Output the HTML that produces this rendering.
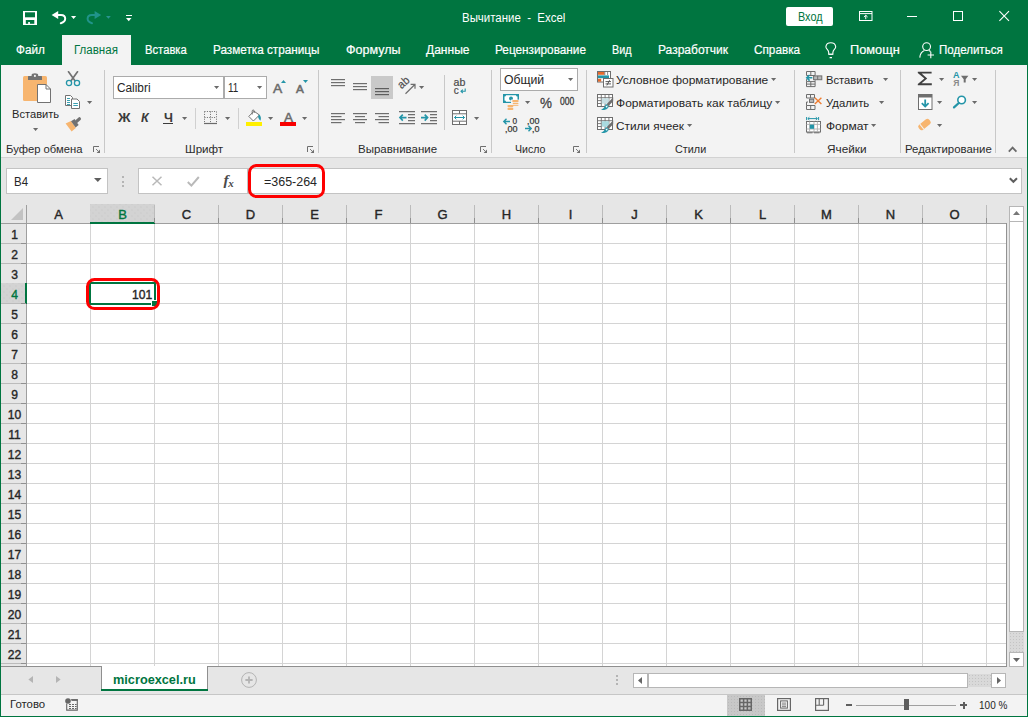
<!DOCTYPE html>
<html><head><meta charset="utf-8"><title>Excel</title><style>
html,body{margin:0;padding:0}
body{width:1028px;height:717px;overflow:hidden;position:relative;background:#e6e6e6;font-family:"Liberation Sans",sans-serif;font-size:12px;color:#262626}
.a{position:absolute}
.t{position:absolute;white-space:nowrap;transform-origin:0 50%;}
.h{position:absolute;text-align:center;font-size:13px;-webkit-text-stroke:0.4px}
svg{overflow:visible}
</style></head><body>
<div class="a" style="left:0px;top:0px;width:1028px;height:65px;background:#007540;"></div>
<div class="t" style="left:461.70px;top:11px;font-size:12.5px;line-height:14px;height:14px;color:#fff;transform:scaleX(0.9162);">Вычитание  -  Excel</div>
<div class="a" style="left:786px;top:7px;width:47px;height:19px;background:#fff;border-radius:2px"></div>
<div class="t" style="left:797.50px;top:10px;font-size:12.5px;line-height:14px;height:14px;color:#007540;transform:scaleX(0.8673);">Вход</div>
<div class="a" style="left:62px;top:35px;width:69px;height:31px;background:#f3f3f3;"></div>
<div class="t" style="left:16.00px;top:43px;font-size:12.3px;line-height:14px;height:14px;color:#fff;transform:scaleX(0.9527);-webkit-text-stroke:0.2px">Файл</div>
<div class="t" style="left:145.00px;top:43px;font-size:12.3px;line-height:14px;height:14px;color:#fff;transform:scaleX(0.9140);-webkit-text-stroke:0.2px">Вставка</div>
<div class="t" style="left:213.30px;top:43px;font-size:12.3px;line-height:14px;height:14px;color:#fff;transform:scaleX(0.9539);-webkit-text-stroke:0.2px">Разметка страницы</div>
<div class="t" style="left:345.70px;top:43px;font-size:12.3px;line-height:14px;height:14px;color:#fff;transform:scaleX(1.0197);-webkit-text-stroke:0.2px">Формулы</div>
<div class="t" style="left:425.70px;top:43px;font-size:12.3px;line-height:14px;height:14px;color:#fff;transform:scaleX(0.9785);-webkit-text-stroke:0.2px">Данные</div>
<div class="t" style="left:495.00px;top:43px;font-size:12.3px;line-height:14px;height:14px;color:#fff;transform:scaleX(0.9585);-webkit-text-stroke:0.2px">Рецензирование</div>
<div class="t" style="left:612.30px;top:43px;font-size:12.3px;line-height:14px;height:14px;color:#fff;transform:scaleX(0.8768);-webkit-text-stroke:0.2px">Вид</div>
<div class="t" style="left:658.00px;top:43px;font-size:12.3px;line-height:14px;height:14px;color:#fff;transform:scaleX(0.9773);-webkit-text-stroke:0.2px">Разработчик</div>
<div class="t" style="left:754.00px;top:43px;font-size:12.3px;line-height:14px;height:14px;color:#fff;transform:scaleX(0.9558);-webkit-text-stroke:0.2px">Справка</div>
<div class="t" style="left:850.40px;top:43px;font-size:12.3px;line-height:14px;height:14px;color:#fff;transform:scaleX(1.0387);-webkit-text-stroke:0.2px">Помощн</div>
<div class="t" style="left:938.60px;top:43px;font-size:12.3px;line-height:14px;height:14px;color:#fff;transform:scaleX(0.9375);-webkit-text-stroke:0.2px">Поделиться</div>
<div class="t" style="left:74.00px;top:43px;font-size:12.3px;line-height:14px;height:14px;color:#007540;transform:scaleX(0.9373);">Главная</div>
<svg class="a" style="left:23px;top:11px" width="14" height="14" viewBox="0 0 14 14"><rect x="0" y="0" width="14" height="14" fill="#fff"/>
<rect x="2" y="1.3" width="10" height="5" fill="#007540"/><rect x="2.8" y="9" width="8.5" height="3.8" fill="#007540"/><rect x="5.2" y="11" width="1.7" height="2" fill="#fff"/></svg>
<svg class="a" style="left:51px;top:10px" width="16" height="15" viewBox="0 0 16 15"><path d="M0.6 5L7.2 1V9z" fill="#fff"/><path d="M6.5 5H10Q14.2 5 14.2 8.8Q14.2 12 9.8 13.2" fill="none" stroke="#fff" stroke-width="2" stroke-linecap="round"/></svg>
<svg class="a" style="left:70.9px;top:16.3px" width="5.2" height="3.0" viewBox="0 0 5.2 3.0"><path d="M0 0h5.2L2.6 3.0z" fill="#fff"/></svg>
<svg class="a" style="left:86px;top:10px" width="16" height="15" viewBox="0 0 16 15"><g opacity="0.62"><path d="M15.2 5L8.6 1V9z" fill="#35a7b8"/><path d="M9.3 5H5.8Q1.6 5 1.6 8.8Q1.6 12 6 13.2" fill="none" stroke="#35a7b8" stroke-width="2" stroke-linecap="round"/></g></svg>
<svg class="a" style="left:106.1px;top:16.3px" width="4.8" height="2.8" viewBox="0 0 4.8 2.8"><path d="M0 0h4.8L2.4 2.8z" fill="#2a9490"/></svg>
<div class="a" style="left:126px;top:15px;width:5.5px;height:1.3px;background:#fff;"></div>
<svg class="a" style="left:126px;top:18px" width="6" height="4" viewBox="0 0 6 4"><path d="M0 0h5.5L2.75 3.2z" fill="#fff"/></svg>
<svg class="a" style="left:859px;top:11px" width="14" height="10" viewBox="0 0 14 10"><rect x="0.5" y="0.5" width="12.5" height="9" fill="none" stroke="#fff" stroke-width="1"/><path d="M0.5 2.6h12.5" stroke="#fff" stroke-width="1"/><path d="M6.75 8.2V4.4M4.9 6L6.75 4.2L8.6 6" stroke="#fff" stroke-width="1" fill="none"/></svg>
<div class="a" style="left:907px;top:16px;width:10px;height:1px;background:#fff;"></div>
<svg class="a" style="left:953px;top:11px" width="10" height="10" viewBox="0 0 10 10"><rect x="0.5" y="0.5" width="9" height="9" fill="none" stroke="#fff" stroke-width="1"/></svg>
<svg class="a" style="left:999px;top:11px" width="11" height="10" viewBox="0 0 11 10"><path d="M0.4 0.2L10 9.8M10 0.2L0.4 9.8" stroke="#fff" stroke-width="1.1"/></svg>
<svg class="a" style="left:825px;top:42px" width="12" height="17" viewBox="0 0 12 17"><path d="M3.7 12.2V10.4Q3.5 8.8 2.2 7.4Q0.7 5.9 0.9 4.6Q1.4 0.7 5.8 0.7T10.7 4.6Q10.9 5.9 9.4 7.4Q8.1 8.8 7.9 10.4V12.2z" fill="none" stroke="#fff" stroke-width="1.1"/><path d="M3.7 12.3h4.2M4.6 15.6h2.4" stroke="#fff" stroke-width="1.1"/></svg>
<svg class="a" style="left:919px;top:42px" width="16" height="16" viewBox="0 0 16 16"><circle cx="7.6" cy="4.6" r="3.9" fill="none" stroke="#fff" stroke-width="1.1"/><path d="M0.8 15.6Q1.2 10 5.4 8.4M9.8 8.4Q11 8.8 11.6 9.6" fill="none" stroke="#fff" stroke-width="1.1"/><path d="M8.6 13h6.4M11.8 9.8v6.4" stroke="#fff" stroke-width="1.1"/></svg>
<div class="a" style="left:1px;top:65px;width:1026px;height:92px;background:#f3f3f3;"></div>
<div class="a" style="left:1px;top:157px;width:1026px;height:1px;background:#d2d2d2;"></div>
<div class="a" style="left:104px;top:70px;width:1px;height:83px;background:#c8c8c8;"></div>
<div class="a" style="left:318px;top:70px;width:1px;height:83px;background:#c8c8c8;"></div>
<div class="a" style="left:491px;top:70px;width:1px;height:83px;background:#c8c8c8;"></div>
<div class="a" style="left:586px;top:70px;width:1px;height:83px;background:#c8c8c8;"></div>
<div class="a" style="left:794px;top:70px;width:1px;height:83px;background:#c8c8c8;"></div>
<div class="a" style="left:900px;top:70px;width:1px;height:83px;background:#c8c8c8;"></div>
<div class="a" style="left:995px;top:70px;width:1px;height:83px;background:#c8c8c8;"></div>
<div class="a" style="left:444px;top:75px;width:1px;height:55px;background:#c8c8c8;"></div>
<div class="t" style="left:6.30px;top:142px;font-size:11.8px;line-height:14px;height:14px;color:#2b2b2b;transform:scaleX(0.9540);">Буфер обмена</div>
<div class="t" style="left:184.50px;top:142px;font-size:11.8px;line-height:14px;height:14px;color:#2b2b2b;transform:scaleX(0.9838);">Шрифт</div>
<div class="t" style="left:357.70px;top:142px;font-size:11.8px;line-height:14px;height:14px;color:#2b2b2b;transform:scaleX(0.9743);">Выравнивание</div>
<div class="t" style="left:514.70px;top:142px;font-size:11.8px;line-height:14px;height:14px;color:#2b2b2b;transform:scaleX(0.8978);">Число</div>
<div class="t" style="left:674.50px;top:142px;font-size:11.8px;line-height:14px;height:14px;color:#2b2b2b;transform:scaleX(0.9181);">Стили</div>
<div class="t" style="left:827.00px;top:142px;font-size:11.8px;line-height:14px;height:14px;color:#2b2b2b;transform:scaleX(1.0006);">Ячейки</div>
<div class="t" style="left:904.60px;top:142px;font-size:11.8px;line-height:14px;height:14px;color:#2b2b2b;transform:scaleX(0.9654);">Редактирование</div>
<svg class="a" style="left:93px;top:146px" width="8" height="8" viewBox="0 0 8 8"><path d="M0.5 6V0.5H6" fill="none" stroke="#6e6e6e" stroke-width="1"/><path d="M7 3.6V7H3.6z" fill="#6e6e6e"/><path d="M3 3L5.2 5.2" stroke="#6e6e6e" stroke-width="0.9"/></svg>
<svg class="a" style="left:307px;top:146px" width="8" height="8" viewBox="0 0 8 8"><path d="M0.5 6V0.5H6" fill="none" stroke="#6e6e6e" stroke-width="1"/><path d="M7 3.6V7H3.6z" fill="#6e6e6e"/><path d="M3 3L5.2 5.2" stroke="#6e6e6e" stroke-width="0.9"/></svg>
<svg class="a" style="left:480px;top:146px" width="8" height="8" viewBox="0 0 8 8"><path d="M0.5 6V0.5H6" fill="none" stroke="#6e6e6e" stroke-width="1"/><path d="M7 3.6V7H3.6z" fill="#6e6e6e"/><path d="M3 3L5.2 5.2" stroke="#6e6e6e" stroke-width="0.9"/></svg>
<svg class="a" style="left:573px;top:146px" width="8" height="8" viewBox="0 0 8 8"><path d="M0.5 6V0.5H6" fill="none" stroke="#6e6e6e" stroke-width="1"/><path d="M7 3.6V7H3.6z" fill="#6e6e6e"/><path d="M3 3L5.2 5.2" stroke="#6e6e6e" stroke-width="0.9"/></svg>
<svg class="a" style="left:23px;top:73px" width="28" height="30" viewBox="0 0 28 30">
<rect x="0" y="3" width="24" height="25" rx="1.5" fill="#f7b56f"/>
<path d="M5 7V3.6Q5 3 5.6 3H8.6V2.2Q8.6 0.3 11.9 0.3T15.2 2.2V3H18.4Q19 3 19 3.6V7z" fill="#727272"/>
<circle cx="11.9" cy="2.9" r="1.05" fill="#f3f3f3"/>
<path d="M14.5 11.5h8.5l4.5 4.5v13.5h-13z" fill="#fff" stroke="#727272" stroke-width="1"/>
<path d="M23 11.5v4.5h4.5" fill="none" stroke="#727272" stroke-width="1"/></svg>
<div class="t" style="left:11.80px;top:107px;font-size:11.8px;line-height:14px;height:14px;color:#262626;transform:scaleX(0.9427);">Вставить</div>
<svg class="a" style="left:32.9px;top:127.5px" width="5.2" height="3.0" viewBox="0 0 5.2 3.0"><path d="M0 0h5.2L2.6 3.0z" fill="#6a6a6a"/></svg>
<svg class="a" style="left:65px;top:71px" width="16" height="16" viewBox="0 0 16 16">
<path d="M3.5 0.8L9.8 9.6M12.5 0.8L6.2 9.6" stroke="#727272" stroke-width="1.7" fill="none" stroke-linecap="round"/>
<circle cx="4" cy="12" r="2.6" fill="none" stroke="#2495a8" stroke-width="1.3"/>
<circle cx="12" cy="12" r="2.6" fill="none" stroke="#2495a8" stroke-width="1.3"/></svg>
<svg class="a" style="left:65px;top:95px" width="16" height="14" viewBox="0 0 16 14">
<path d="M0.5 0.5h5l2 2v8h-7z" fill="#fff" stroke="#727272"/>
<path d="M2 3.5h3M2 5.5h3M2 7.5h3M2 9.5h3" stroke="#2495a8" stroke-width="0.9"/>
<path d="M6.5 4h5.5l2.5 2.5v7h-8z" fill="#fff" stroke="#727272"/>
<path d="M8.3 8.5h4.6M8.3 10.5h4.6" stroke="#2495a8" stroke-width="0.9"/></svg>
<svg class="a" style="left:86.9px;top:101.0px" width="5.2" height="3.0" viewBox="0 0 5.2 3.0"><path d="M0 0h5.2L2.6 3.0z" fill="#6a6a6a"/></svg>
<svg class="a" style="left:65px;top:117px" width="17" height="15" viewBox="0 0 17 15">
<path d="M0.6 6.4L6 4L10.8 11L6.6 14.4z" fill="#f7b56f"/>
<path d="M6 4.2L9.6 2L13.6 8L10.6 10.6z" fill="#727272"/>
<path d="M11.6 4.4L14.4 1.8" stroke="#727272" stroke-width="3.2" stroke-linecap="round"/></svg>
<div class="a" style="left:113px;top:76px;width:109px;height:21px;background:#fff;border:1px solid #ababab"></div>
<div class="a" style="left:224px;top:76px;width:41px;height:21px;background:#fff;border:1px solid #ababab"></div>
<div class="t" style="left:116.80px;top:81px;font-size:12px;line-height:14px;height:14px;color:#262626;transform:scaleX(0.9853);">Calibri</div>
<div class="t" style="left:228.00px;top:81px;font-size:12px;line-height:14px;height:14px;color:#262626;transform:scaleX(0.8240);">11</div>
<svg class="a" style="left:213.9px;top:86.0px" width="5.2" height="3.0" viewBox="0 0 5.2 3.0"><path d="M0 0h5.2L2.6 3.0z" fill="#6a6a6a"/></svg>
<svg class="a" style="left:256.9px;top:86.0px" width="5.2" height="3.0" viewBox="0 0 5.2 3.0"><path d="M0 0h5.2L2.6 3.0z" fill="#6a6a6a"/></svg>
<div class="t" style="left:273.30px;top:81px;font-size:13.5px;line-height:15px;height:15px;color:#6a6a6a;transform:scaleX(1.0222);-webkit-text-stroke:0.5px #6a6a6a">A</div>
<div class="t" style="left:296.00px;top:83px;font-size:10.5px;line-height:12px;height:12px;color:#6a6a6a;transform:scaleX(1.1143);-webkit-text-stroke:0.5px #6a6a6a">A</div>
<svg class="a" style="left:281px;top:80px" width="5" height="3" viewBox="0 0 5 3"><path d="M0 3L2.5 0L5 3z" fill="#2495a8"/></svg>
<svg class="a" style="left:303px;top:80px" width="5" height="3" viewBox="0 0 5 3"><path d="M0 0h5L2.5 3z" fill="#2495a8"/></svg>
<div class="t" style="left:117.74px;top:111px;font-size:12px;line-height:14px;height:14px;color:#3b3b3b;font-weight:bold;transform:scaleX(1.1596);">Ж</div>
<div class="t" style="left:141.00px;top:111px;font-size:12px;line-height:14px;height:14px;color:#3b3b3b;font-weight:bold;font-style:italic;transform:scaleX(1.0462);">К</div>
<div class="t" style="left:163.60px;top:111px;font-size:12px;line-height:14px;height:14px;color:#3b3b3b;font-weight:bold;transform:scaleX(1.0627);">Ч</div>
<div class="a" style="left:163px;top:123px;width:10px;height:1px;background:#3b3b3b;"></div>
<svg class="a" style="left:181.9px;top:117.0px" width="5.2" height="3.0" viewBox="0 0 5.2 3.0"><path d="M0 0h5.2L2.6 3.0z" fill="#6a6a6a"/></svg>
<div class="a" style="left:195px;top:108px;width:1px;height:21px;background:#d0d0d0;"></div>
<div class="a" style="left:238px;top:108px;width:1px;height:21px;background:#d0d0d0;"></div>
<svg class="a" style="left:204px;top:111px" width="13" height="13" viewBox="0 0 13 13"><path d="M0.5 0.5h12M0.5 6.5h12M0.5 0.5v11M6.5 0.5v11M12.5 0.5v11" stroke="#6a6a6a" stroke-width="1" stroke-dasharray="1 1.4" fill="none"/>
<path d="M0 12.5h13" stroke="#6a6a6a" stroke-width="1.2"/></svg>
<svg class="a" style="left:224.9px;top:117.0px" width="5.2" height="3.0" viewBox="0 0 5.2 3.0"><path d="M0 0h5.2L2.6 3.0z" fill="#6a6a6a"/></svg>
<svg class="a" style="left:246px;top:109px" width="17" height="17" viewBox="0 0 17 17">
<path d="M8 2.2L2.8 7.4L7.4 12L13.4 6z" fill="#fff" stroke="#727272" stroke-width="1"/>
<path d="M6.2 5.5V2.2q0-1.2 1-1.2t1 1.2V4" fill="none" stroke="#727272" stroke-width="1"/>
<path d="M13.2 5.5q2.6 2.6 1.2 6.2q-1.6-1.2-2.4-4z" fill="#2495a8"/>
<rect x="0" y="13" width="16" height="4" fill="#ffef00"/></svg>
<svg class="a" style="left:267.9px;top:117.0px" width="5.2" height="3.0" viewBox="0 0 5.2 3.0"><path d="M0 0h5.2L2.6 3.0z" fill="#6a6a6a"/></svg>
<div class="t" style="left:284.00px;top:110px;font-size:13.5px;line-height:15px;height:15px;color:#6a6a6a;transform:scaleX(1.0000);-webkit-text-stroke:0.5px #6a6a6a">A</div>
<div class="a" style="left:280px;top:122px;width:16px;height:4px;background:#f80000;"></div>
<svg class="a" style="left:301.9px;top:117.0px" width="5.2" height="3.0" viewBox="0 0 5.2 3.0"><path d="M0 0h5.2L2.6 3.0z" fill="#6a6a6a"/></svg>
<svg class="a" style="left:331px;top:79px" width="16" height="16" viewBox="0 0 16 16"><rect x="0" y="0" width="14" height="1.2" fill="#6e6e6e"/><rect x="0" y="3" width="14" height="1.2" fill="#6e6e6e"/><rect x="0" y="6" width="14" height="1.2" fill="#6e6e6e"/></svg>
<svg class="a" style="left:353px;top:83px" width="16" height="16" viewBox="0 0 16 16"><rect x="0" y="0" width="14" height="1.2" fill="#6e6e6e"/><rect x="0" y="3" width="14" height="1.2" fill="#6e6e6e"/><rect x="0" y="6" width="14" height="1.2" fill="#6e6e6e"/></svg>
<div class="a" style="left:371px;top:76px;width:22px;height:23px;background:#c9c9c9;"></div>
<svg class="a" style="left:375px;top:88px" width="16" height="16" viewBox="0 0 16 16"><rect x="0" y="0" width="14" height="1.2" fill="#5e5e5e"/><rect x="0" y="3" width="14" height="1.2" fill="#5e5e5e"/><rect x="0" y="6" width="14" height="1.2" fill="#5e5e5e"/></svg>
<svg class="a" style="left:399px;top:78px" width="18" height="17" viewBox="0 0 18 17"><text x="0" y="0" font-size="11.5" font-family="Liberation Sans" fill="#4f4f4f" stroke="#4f4f4f" stroke-width="0.2" transform="translate(2.6,11.2) rotate(-42) scale(0.92,1)">ab</text>
<path d="M6.5 15.8L15.6 6.8M11.6 6.3h4.4v4.4" stroke="#6e6e6e" stroke-width="1.2" fill="none"/></svg>
<svg class="a" style="left:418.9px;top:86.0px" width="5.2" height="3.0" viewBox="0 0 5.2 3.0"><path d="M0 0h5.2L2.6 3.0z" fill="#6a6a6a"/></svg>
<svg class="a" style="left:453px;top:79px" width="14" height="16" viewBox="0 0 14 16"><text x="0.6" y="7.2" font-size="10" font-family="Liberation Sans" fill="#4a4a4a" stroke="#4a4a4a" stroke-width="0.2" textLength="11.8" lengthAdjust="spacingAndGlyphs">ab</text>
<text x="0.8" y="14.8" font-size="10" font-family="Liberation Sans" fill="#4a4a4a" stroke="#4a4a4a" stroke-width="0.2">c</text>
<path d="M12.2 9.5v2.8H8.2M9.8 10.6L8 12.3L9.8 14" stroke="#2495a8" stroke-width="1.1" fill="none"/></svg>
<svg class="a" style="left:331px;top:113px" width="16" height="16" viewBox="0 0 16 16"><rect x="0" y="0" width="14" height="1.2" fill="#6e6e6e"/><rect x="0" y="3" width="10.5" height="1.2" fill="#6e6e6e"/><rect x="0" y="6" width="14" height="1.2" fill="#6e6e6e"/><rect x="0" y="9" width="10.5" height="1.2" fill="#6e6e6e"/></svg>
<svg class="a" style="left:353px;top:113px" width="16" height="16" viewBox="0 0 16 16"><rect x="0" y="0" width="14" height="1.2" fill="#6e6e6e"/><rect x="2" y="3" width="10" height="1.2" fill="#6e6e6e"/><rect x="0" y="6" width="14" height="1.2" fill="#6e6e6e"/><rect x="2" y="9" width="10" height="1.2" fill="#6e6e6e"/></svg>
<svg class="a" style="left:375px;top:113px" width="16" height="16" viewBox="0 0 16 16"><rect x="0" y="0" width="14" height="1.2" fill="#6e6e6e"/><rect x="3.5" y="3" width="10.5" height="1.2" fill="#6e6e6e"/><rect x="0" y="6" width="14" height="1.2" fill="#6e6e6e"/><rect x="3.5" y="9" width="10.5" height="1.2" fill="#6e6e6e"/></svg>
<svg class="a" style="left:399px;top:111px" width="16" height="13" viewBox="0 0 16 13"><path d="M0 0.6h16M9 3.6h7M9 6.6h7M9 9.6h7M0 12.6h16" stroke="#6e6e6e" stroke-width="1.2"/>
<path d="M7.5 6.6H1.2M3.8 3.6L0.9 6.6L3.8 9.6" stroke="#2495a8" stroke-width="1.6" fill="none"/></svg>
<svg class="a" style="left:421px;top:111px" width="16" height="13" viewBox="0 0 16 13"><path d="M0 0.6h16M9 3.6h7M9 6.6h7M9 9.6h7M0 12.6h16" stroke="#6e6e6e" stroke-width="1.2"/>
<path d="M0 6.6h6.3M3.7 3.6L6.6 6.6L3.7 9.6" stroke="#2495a8" stroke-width="1.6" fill="none"/></svg>
<svg class="a" style="left:452px;top:110px" width="15" height="15" viewBox="0 0 15 15"><rect x="0.5" y="0.5" width="14" height="14" fill="#fff" stroke="#6e6e6e"/>
<path d="M0.5 3.8h14M0.5 11.2h14M7.5 0.5v3.3M7.5 11.2v3.3" stroke="#6e6e6e" stroke-width="1"/>
<path d="M2.5 7.5h10M4.3 5.7L2.5 7.5L4.3 9.3M10.7 5.7L12.5 7.5L10.7 9.3" stroke="#2495a8" stroke-width="1" fill="none"/></svg>
<svg class="a" style="left:473.9px;top:117.0px" width="5.2" height="3.0" viewBox="0 0 5.2 3.0"><path d="M0 0h5.2L2.6 3.0z" fill="#6a6a6a"/></svg>
<div class="a" style="left:500px;top:68px;width:76px;height:21px;background:#fff;border:1px solid #ababab"></div>
<div class="t" style="left:503.80px;top:73px;font-size:12px;line-height:14px;height:14px;color:#262626;transform:scaleX(1.0177);">Общий</div>
<svg class="a" style="left:567.9px;top:78.0px" width="5.2" height="3.0" viewBox="0 0 5.2 3.0"><path d="M0 0h5.2L2.6 3.0z" fill="#6a6a6a"/></svg>
<svg class="a" style="left:503px;top:94px" width="17" height="17" viewBox="0 0 17 17"><rect x="0" y="0" width="16" height="9" fill="#2495a8"/>
<path d="M1.5 2.5q1.5 0 1.5-1.2h10q0 1.2 1.5 1.2v4q-1.5 0-1.5 1.2h-10q0-1.2-1.5-1.2z" fill="#fff"/>
<circle cx="8" cy="4.5" r="2" fill="#2495a8"/>
<rect x="8" y="5.6" width="8.5" height="10.5" fill="#f3f3f3"/>
<rect x="9.2" y="6" width="6.5" height="2.2" rx="1.1" fill="#f7b56f"/><rect x="9.8" y="9" width="5.6" height="1" fill="#f7b56f"/><rect x="9.8" y="10.8" width="5.6" height="1" fill="#f7b56f"/>
<rect x="4.4" y="11" width="6" height="2.2" rx="1.1" fill="#f7b56f"/><rect x="4.4" y="13.8" width="6" height="2.2" rx="1.1" fill="#f7b56f"/></svg>
<svg class="a" style="left:524.9px;top:101.0px" width="5.2" height="3.0" viewBox="0 0 5.2 3.0"><path d="M0 0h5.2L2.6 3.0z" fill="#6a6a6a"/></svg>
<div class="t" style="left:539.80px;top:94px;font-size:15px;line-height:17px;height:17px;color:#444;transform:scaleX(0.8972);-webkit-text-stroke:0.3px #444">%</div>
<div class="t" style="left:560.00px;top:96px;font-size:10px;line-height:11px;height:11px;color:#3a3a3a;transform:scaleX(0.8537);-webkit-text-stroke:0.3px #3a3a3a">000</div>
<svg class="a" style="left:503px;top:118px" width="15" height="15" viewBox="0 0 15 15"><path d="M7 3.5H1M3.5 0.8L0.8 3.5L3.5 6.2" stroke="#2495a8" stroke-width="1.4" fill="none"/>
<text x="9.5" y="6.3" font-size="8.5" font-family="Liberation Sans" fill="#3a3a3a" stroke="#3a3a3a" stroke-width="0.25" textLength="4.6" lengthAdjust="spacingAndGlyphs">0</text>
<text x="2" y="13.8" font-size="8.5" font-family="Liberation Sans" fill="#3a3a3a" stroke="#3a3a3a" stroke-width="0.25" textLength="12.6" lengthAdjust="spacingAndGlyphs">,00</text></svg>
<svg class="a" style="left:525px;top:118px" width="15" height="15" viewBox="0 0 15 15"><text x="2" y="6.3" font-size="8.5" font-family="Liberation Sans" fill="#3a3a3a" stroke="#3a3a3a" stroke-width="0.25" textLength="12.4" lengthAdjust="spacingAndGlyphs">,00</text>
<path d="M0 10.5h6M3.5 7.8L6.2 10.5L3.5 13.2" stroke="#2495a8" stroke-width="1.4" fill="none"/>
<text x="7" y="13.8" font-size="8.5" font-family="Liberation Sans" fill="#3a3a3a" stroke="#3a3a3a" stroke-width="0.25" textLength="7.5" lengthAdjust="spacingAndGlyphs">,0</text></svg>
<svg class="a" style="left:597px;top:71px" width="17" height="17" viewBox="0 0 17 17"><rect x="0.5" y="0.5" width="13" height="10.5" fill="#fff" stroke="#6e6e6e"/>
<rect x="1" y="1" width="6.5" height="2.8" fill="#e66a2c"/><rect x="1" y="4.4" width="11" height="2.8" fill="#2495a8"/><rect x="1" y="7.8" width="3.2" height="2.8" fill="#e66a2c"/>
<path d="M7.8 1v3M10.6 1v3" stroke="#6e6e6e" stroke-width="0.8"/>
<rect x="6.5" y="7.5" width="9.5" height="8.5" fill="#fff" stroke="#6e6e6e"/>
<path d="M8.5 10.6h5.5M8.5 12.9h5.5M12.6 9.2L9.9 14.4" stroke="#4a4a4a" stroke-width="0.9"/></svg>
<svg class="a" style="left:597px;top:94px" width="17" height="17" viewBox="0 0 17 17"><rect x="0.5" y="0.5" width="15" height="12" fill="#fff" stroke="#6e6e6e"/>
<path d="M0.5 3.7h15M4.3 0.5v12M8.1 0.5v12M11.9 0.5v12M0.5 6.6h4M0.5 9.5h4" stroke="#6e6e6e" stroke-width="0.9"/>
<rect x="4.8" y="4.2" width="7" height="5.5" fill="#c8dfe3"/>
<path d="M16.2 3.2L9.6 10.2L11.4 11.9L16.2 7.2z" fill="#6e6e6e"/>
<path d="M9.2 10L11.8 12.4Q11 16 4 16Q7.5 14 9.2 10z" fill="#2495a8"/><circle cx="9.6" cy="12.6" r="0.9" fill="#fff"/></svg>
<svg class="a" style="left:597px;top:117px" width="17" height="17" viewBox="0 0 17 17"><rect x="0.5" y="0.5" width="15" height="12" fill="#fff" stroke="#6e6e6e"/>
<path d="M0.5 3.7h15M4.3 0.5v12M8.1 0.5v12M11.9 0.5v12M0.5 6.6h4M0.5 9.5h4" stroke="#6e6e6e" stroke-width="0.9"/>
<rect x="4.8" y="4.2" width="7" height="5.5" fill="#a9dbe0"/>
<path d="M16.2 3.2L9.6 10.2L11.4 11.9L16.2 7.2z" fill="#6e6e6e"/>
<path d="M9.2 10L11.8 12.4Q11 16 4 16Q7.5 14 9.2 10z" fill="#2495a8"/><circle cx="9.6" cy="12.6" r="0.9" fill="#fff"/></svg>
<div class="t" style="left:616.30px;top:73px;font-size:11.8px;line-height:14px;height:14px;color:#262626;transform:scaleX(1.0147);">Условное форматирование</div>
<div class="t" style="left:616.30px;top:96px;font-size:11.8px;line-height:14px;height:14px;color:#262626;transform:scaleX(1.0185);">Форматировать как таблицу</div>
<div class="t" style="left:616.30px;top:119px;font-size:11.8px;line-height:14px;height:14px;color:#262626;transform:scaleX(0.9974);">Стили ячеек</div>
<svg class="a" style="left:770.9px;top:78.0px" width="5.2" height="3.0" viewBox="0 0 5.2 3.0"><path d="M0 0h5.2L2.6 3.0z" fill="#6a6a6a"/></svg>
<svg class="a" style="left:774.9px;top:101.0px" width="5.2" height="3.0" viewBox="0 0 5.2 3.0"><path d="M0 0h5.2L2.6 3.0z" fill="#6a6a6a"/></svg>
<svg class="a" style="left:686.9px;top:124.0px" width="5.2" height="3.0" viewBox="0 0 5.2 3.0"><path d="M0 0h5.2L2.6 3.0z" fill="#6a6a6a"/></svg>
<svg class="a" style="left:806px;top:71px" width="16" height="16" viewBox="0 0 16 16"><path d="M0.5 0.5h8.6v4h-8.6zM4.8 0.5v4M0.5 10.6h8.6v5h-8.6zM4.8 10.6v5M0.5 13.1h8.6M0.5 8.2v2.4M9.1 9.2v1.4" fill="none" stroke="#6e6e6e" stroke-width="1"/>
<rect x="7.6" y="4.9" width="8.2" height="3.8" fill="#b9b9b9" stroke="#6e6e6e"/><path d="M11.7 4.9v3.8" stroke="#6e6e6e"/>
<path d="M6.3 6.8H1M3.6 4L0.8 6.8L3.6 9.6" stroke="#2495a8" stroke-width="1.6" fill="none"/></svg>
<div class="t" style="left:825.60px;top:73px;font-size:11.8px;line-height:14px;height:14px;color:#262626;transform:scaleX(0.9487);">Вставить</div>
<svg class="a" style="left:883.1px;top:78.0px" width="5.2" height="3.0" viewBox="0 0 5.2 3.0"><path d="M0 0h5.2L2.6 3.0z" fill="#6a6a6a"/></svg>
<svg class="a" style="left:806px;top:94px" width="16" height="16" viewBox="0 0 16 16"><path d="M0.5 0.5h8v3.5h-8zM4.5 0.5v3.5M0.5 11.5h8.5v4h-8.5zM4.7 11.5v4M0.5 8v3.5M2 8h-1.5" fill="none" stroke="#6e6e6e" stroke-width="1"/>
<rect x="3.5" y="5.2" width="4.2" height="3.2" fill="#b9b9b9" stroke="#6e6e6e"/>
<path d="M8.8 3.8L15.4 10M15.4 3.8L8.8 10" stroke="#ee7d31" stroke-width="1.4" fill="none"/></svg>
<div class="t" style="left:825.60px;top:96px;font-size:11.8px;line-height:14px;height:14px;color:#262626;transform:scaleX(0.9604);">Удалить</div>
<svg class="a" style="left:879.0px;top:101.0px" width="5.2" height="3.0" viewBox="0 0 5.2 3.0"><path d="M0 0h5.2L2.6 3.0z" fill="#6a6a6a"/></svg>
<svg class="a" style="left:806px;top:117px" width="16" height="16" viewBox="0 0 16 16"><path d="M0.6 0v3.2M12.6 0v3.2M2 1.6h9.2M3.4 0.2L1.8 1.6L3.4 3M9.8 0.2L11.4 1.6L9.8 3" stroke="#2495a8" stroke-width="1" fill="none"/>
<rect x="0.5" y="4.5" width="14" height="10.5" fill="#fff" stroke="#6e6e6e"/>
<path d="M0.5 7.4h14M0.5 12h14M3.6 4.5v10.5M8 4.5v10.5M11.4 4.5v10.5" stroke="#b0b0b0" stroke-width="0.9"/>
<rect x="3.8" y="7.6" width="4.2" height="4.2" fill="#2495a8"/>
<path d="M1 15.8h5.5M8 15.8h5.5" stroke="#6e6e6e" stroke-width="1"/></svg>
<div class="t" style="left:825.60px;top:119px;font-size:11.8px;line-height:14px;height:14px;color:#262626;transform:scaleX(1.0156);">Формат</div>
<svg class="a" style="left:870.9px;top:124.0px" width="5.2" height="3.0" viewBox="0 0 5.2 3.0"><path d="M0 0h5.2L2.6 3.0z" fill="#6a6a6a"/></svg>
<svg class="a" style="left:917px;top:71px" width="16" height="15" viewBox="0 0 16 15"><path d="M14.6 2.6V0.8H0.8V2L7.4 7.5L0.8 13V14.2H14.8V12.2H4.6L10.2 7.5L4.6 2.6z" fill="#3f3f3f"/></svg>
<svg class="a" style="left:938.9px;top:77.8px" width="5.2" height="3.0" viewBox="0 0 5.2 3.0"><path d="M0 0h5.2L2.6 3.0z" fill="#6a6a6a"/></svg>
<svg class="a" style="left:953px;top:71px" width="16" height="16" viewBox="0 0 16 16"><text x="0" y="6.6" font-size="9" font-weight="bold" font-family="Liberation Sans" fill="#2495a8">A</text>
<text x="0.2" y="15.4" font-size="8.5" font-weight="bold" font-family="Liberation Sans" fill="#8a8a8a">Я</text>
<path d="M8 4.8h7.4L12.7 8.2V11.6H10.7V8.2z" fill="#6e6e6e"/></svg>
<svg class="a" style="left:971.9px;top:77.8px" width="5.2" height="3.0" viewBox="0 0 5.2 3.0"><path d="M0 0h5.2L2.6 3.0z" fill="#6a6a6a"/></svg>
<svg class="a" style="left:918px;top:94px" width="15" height="16" viewBox="0 0 15 16"><rect x="0.5" y="0.5" width="13.5" height="15" fill="#fff" stroke="#6e6e6e"/><rect x="0.5" y="0.5" width="13.5" height="3" fill="#6e6e6e"/>
<path d="M7.2 5.5v7M3.8 9.2L7.2 12.6L10.6 9.2" stroke="#2495a8" stroke-width="1.8" fill="none"/></svg>
<svg class="a" style="left:936.9px;top:101.0px" width="5.2" height="3.0" viewBox="0 0 5.2 3.0"><path d="M0 0h5.2L2.6 3.0z" fill="#6a6a6a"/></svg>
<svg class="a" style="left:953px;top:95px" width="14" height="14" viewBox="0 0 14 14"><circle cx="8.6" cy="5" r="3.8" fill="#fff" stroke="#2495a8" stroke-width="1.6"/><path d="M5.8 8L1 12.4" stroke="#2495a8" stroke-width="2.2" stroke-linecap="round"/></svg>
<svg class="a" style="left:971.9px;top:101.0px" width="5.2" height="3.0" viewBox="0 0 5.2 3.0"><path d="M0 0h5.2L2.6 3.0z" fill="#6a6a6a"/></svg>
<svg class="a" style="left:918px;top:118px" width="14" height="13" viewBox="0 0 14 13"><g transform="rotate(-38 6.5 6.5)"><rect x="-0.2" y="3.3" width="13.4" height="6.4" rx="2.4" fill="#f7b56f"/><rect x="2.6" y="3.3" width="0.9" height="6.4" fill="#f3f3f3"/></g></svg>
<svg class="a" style="left:936.9px;top:124.0px" width="5.2" height="3.0" viewBox="0 0 5.2 3.0"><path d="M0 0h5.2L2.6 3.0z" fill="#6a6a6a"/></svg>
<svg class="a" style="left:1008px;top:146px" width="10" height="7" viewBox="0 0 10 7"><path d="M0.8 5.6L4.6 1.6L8.4 5.6" stroke="#6a6a6a" stroke-width="1.8" fill="none"/></svg>
<div class="a" style="left:6px;top:168px;width:100px;height:24px;background:#fff;border:1px solid #c3c3c3"></div>
<div class="t" style="left:14.00px;top:175px;font-size:12.5px;line-height:14px;height:14px;color:#262626;transform:scaleX(0.9180);">B4</div>
<svg class="a" style="left:93.5px;top:178px" width="8" height="4" viewBox="0 0 8 4"><path d="M0 0h7.6L3.8 4z" fill="#5e5e5e"/></svg>
<div class="a" style="left:122px;top:176px;width:2px;height:2px;background:#b4b4b4;"></div>
<div class="a" style="left:122px;top:181px;width:2px;height:2px;background:#b4b4b4;"></div>
<div class="a" style="left:122px;top:185px;width:2px;height:2px;background:#b4b4b4;"></div>
<div class="a" style="left:138px;top:168px;width:108px;height:24px;background:#fff;border:1px solid #c3c3c3"></div>
<div class="a" style="left:248px;top:168px;width:772px;height:24px;background:#fff;border:1px solid #c3c3c3"></div>
<svg class="a" style="left:152px;top:176px" width="10" height="10" viewBox="0 0 10 10"><path d="M0.5 0.8L9.5 9.2M9.5 0.8L0.5 9.2" stroke="#b9b9b9" stroke-width="1.5"/></svg>
<svg class="a" style="left:187px;top:176px" width="13" height="11" viewBox="0 0 13 11"><path d="M0.8 6L4.4 9.6L11.8 1" stroke="#b9b9b9" stroke-width="2" fill="none"/></svg>
<div class="t" style="left:223.5px;top:171px;font-family:'Liberation Serif',serif;font-style:italic;font-size:15.5px;line-height:17px;color:#4a4a4a;font-weight:bold">f<span style="font-size:11px;position:relative;top:1.5px;left:-0.5px">x</span></div>
<div class="t" style="left:263.50px;top:175px;font-size:12.5px;line-height:14px;height:14px;color:#262626;transform:scaleX(0.9976);">=365-264</div>
<svg class="a" style="left:1009px;top:177px" width="9" height="7" viewBox="0 0 9 7"><path d="M0.8 1.2L4.4 4.8L8 1.2" stroke="#5e5e5e" stroke-width="2" fill="none"/></svg>
<div class="a" style="left:248px;top:164px;width:71px;height:28px;border:3px solid #fe0000;border-radius:8.5px"></div>
<div class="a" style="left:27px;top:224px;width:979px;height:442px;background:#fff;"></div>
<div class="a" style="left:1px;top:223px;width:1006px;height:1px;background:#9e9e9e;"></div>
<div class="a" style="left:26px;top:205px;width:1px;height:461px;background:#9e9e9e;"></div>
<div class="a" style="left:1006px;top:223px;width:1px;height:444px;background:#929292;"></div>
<div class="a" style="left:1px;top:666px;width:1006px;height:1px;background:#8f8f8f;"></div>
<svg class="a" style="left:11px;top:208px" width="12" height="12" viewBox="0 0 12 12"><path d="M12 0V12H0z" fill="#c2c2c2"/></svg>
<div class="h" style="left:27px;top:204px;width:63px;height:19px;line-height:21px;color:#262626">A</div>
<div class="a" style="left:90px;top:205px;width:1px;height:13px;background:#bbbbbb;"></div>
<div class="a" style="left:90px;top:218px;width:1px;height:5px;background:#909090;"></div>
<div class="a" style="left:90px;top:224px;width:1px;height:442px;background:#d4d4d4;"></div>
<div class="a" style="left:90px;top:204px;width:65px;height:18px;background:#d3d3d3;background-image:radial-gradient(#bcbcbc 0.5px,transparent 0.75px),radial-gradient(#bcbcbc 0.5px,transparent 0.75px);background-size:6px 6px;background-position:0 0,3px 3px"></div>
<div class="a" style="left:90px;top:222px;width:65px;height:2px;background:#007540;"></div>
<div class="h" style="left:91px;top:204px;width:63px;height:19px;line-height:21px;color:#007540">B</div>
<div class="a" style="left:154px;top:205px;width:1px;height:13px;background:#bbbbbb;"></div>
<div class="a" style="left:154px;top:218px;width:1px;height:5px;background:#909090;"></div>
<div class="a" style="left:154px;top:224px;width:1px;height:442px;background:#d4d4d4;"></div>
<div class="h" style="left:155px;top:204px;width:63px;height:19px;line-height:21px;color:#262626">C</div>
<div class="a" style="left:218px;top:205px;width:1px;height:13px;background:#bbbbbb;"></div>
<div class="a" style="left:218px;top:218px;width:1px;height:5px;background:#909090;"></div>
<div class="a" style="left:218px;top:224px;width:1px;height:442px;background:#d4d4d4;"></div>
<div class="h" style="left:219px;top:204px;width:63px;height:19px;line-height:21px;color:#262626">D</div>
<div class="a" style="left:282px;top:205px;width:1px;height:13px;background:#bbbbbb;"></div>
<div class="a" style="left:282px;top:218px;width:1px;height:5px;background:#909090;"></div>
<div class="a" style="left:282px;top:224px;width:1px;height:442px;background:#d4d4d4;"></div>
<div class="h" style="left:283px;top:204px;width:63px;height:19px;line-height:21px;color:#262626">E</div>
<div class="a" style="left:346px;top:205px;width:1px;height:13px;background:#bbbbbb;"></div>
<div class="a" style="left:346px;top:218px;width:1px;height:5px;background:#909090;"></div>
<div class="a" style="left:346px;top:224px;width:1px;height:442px;background:#d4d4d4;"></div>
<div class="h" style="left:347px;top:204px;width:63px;height:19px;line-height:21px;color:#262626">F</div>
<div class="a" style="left:410px;top:205px;width:1px;height:13px;background:#bbbbbb;"></div>
<div class="a" style="left:410px;top:218px;width:1px;height:5px;background:#909090;"></div>
<div class="a" style="left:410px;top:224px;width:1px;height:442px;background:#d4d4d4;"></div>
<div class="h" style="left:411px;top:204px;width:63px;height:19px;line-height:21px;color:#262626">G</div>
<div class="a" style="left:474px;top:205px;width:1px;height:13px;background:#bbbbbb;"></div>
<div class="a" style="left:474px;top:218px;width:1px;height:5px;background:#909090;"></div>
<div class="a" style="left:474px;top:224px;width:1px;height:442px;background:#d4d4d4;"></div>
<div class="h" style="left:475px;top:204px;width:63px;height:19px;line-height:21px;color:#262626">H</div>
<div class="a" style="left:538px;top:205px;width:1px;height:13px;background:#bbbbbb;"></div>
<div class="a" style="left:538px;top:218px;width:1px;height:5px;background:#909090;"></div>
<div class="a" style="left:538px;top:224px;width:1px;height:442px;background:#d4d4d4;"></div>
<div class="h" style="left:539px;top:204px;width:63px;height:19px;line-height:21px;color:#262626">I</div>
<div class="a" style="left:602px;top:205px;width:1px;height:13px;background:#bbbbbb;"></div>
<div class="a" style="left:602px;top:218px;width:1px;height:5px;background:#909090;"></div>
<div class="a" style="left:602px;top:224px;width:1px;height:442px;background:#d4d4d4;"></div>
<div class="h" style="left:603px;top:204px;width:63px;height:19px;line-height:21px;color:#262626">J</div>
<div class="a" style="left:666px;top:205px;width:1px;height:13px;background:#bbbbbb;"></div>
<div class="a" style="left:666px;top:218px;width:1px;height:5px;background:#909090;"></div>
<div class="a" style="left:666px;top:224px;width:1px;height:442px;background:#d4d4d4;"></div>
<div class="h" style="left:667px;top:204px;width:63px;height:19px;line-height:21px;color:#262626">K</div>
<div class="a" style="left:730px;top:205px;width:1px;height:13px;background:#bbbbbb;"></div>
<div class="a" style="left:730px;top:218px;width:1px;height:5px;background:#909090;"></div>
<div class="a" style="left:730px;top:224px;width:1px;height:442px;background:#d4d4d4;"></div>
<div class="h" style="left:731px;top:204px;width:63px;height:19px;line-height:21px;color:#262626">L</div>
<div class="a" style="left:794px;top:205px;width:1px;height:13px;background:#bbbbbb;"></div>
<div class="a" style="left:794px;top:218px;width:1px;height:5px;background:#909090;"></div>
<div class="a" style="left:794px;top:224px;width:1px;height:442px;background:#d4d4d4;"></div>
<div class="h" style="left:795px;top:204px;width:63px;height:19px;line-height:21px;color:#262626">M</div>
<div class="a" style="left:858px;top:205px;width:1px;height:13px;background:#bbbbbb;"></div>
<div class="a" style="left:858px;top:218px;width:1px;height:5px;background:#909090;"></div>
<div class="a" style="left:858px;top:224px;width:1px;height:442px;background:#d4d4d4;"></div>
<div class="h" style="left:859px;top:204px;width:63px;height:19px;line-height:21px;color:#262626">N</div>
<div class="a" style="left:922px;top:205px;width:1px;height:13px;background:#bbbbbb;"></div>
<div class="a" style="left:922px;top:218px;width:1px;height:5px;background:#909090;"></div>
<div class="a" style="left:922px;top:224px;width:1px;height:442px;background:#d4d4d4;"></div>
<div class="h" style="left:923px;top:204px;width:63px;height:19px;line-height:21px;color:#262626">O</div>
<div class="a" style="left:986px;top:205px;width:1px;height:13px;background:#bbbbbb;"></div>
<div class="a" style="left:986px;top:218px;width:1px;height:5px;background:#909090;"></div>
<div class="a" style="left:986px;top:224px;width:1px;height:442px;background:#d4d4d4;"></div>
<div class="h" style="left:2px;top:224px;width:25px;height:19px;line-height:21px;color:#262626;transform:scaleX(0.93)">1</div>
<div class="a" style="left:27px;top:243px;width:979px;height:1px;background:#d4d4d4;"></div>
<div class="a" style="left:1px;top:243px;width:20px;height:1px;background:#bbbbbb;"></div>
<div class="a" style="left:21px;top:243px;width:5px;height:1px;background:#909090;"></div>
<div class="h" style="left:2px;top:244px;width:25px;height:19px;line-height:21px;color:#262626;transform:scaleX(0.93)">2</div>
<div class="a" style="left:27px;top:263px;width:979px;height:1px;background:#d4d4d4;"></div>
<div class="a" style="left:1px;top:263px;width:20px;height:1px;background:#bbbbbb;"></div>
<div class="a" style="left:21px;top:263px;width:5px;height:1px;background:#909090;"></div>
<div class="h" style="left:2px;top:264px;width:25px;height:19px;line-height:21px;color:#262626;transform:scaleX(0.93)">3</div>
<div class="a" style="left:27px;top:283px;width:979px;height:1px;background:#d4d4d4;"></div>
<div class="a" style="left:1px;top:283px;width:20px;height:1px;background:#bbbbbb;"></div>
<div class="a" style="left:21px;top:283px;width:5px;height:1px;background:#909090;"></div>
<div class="a" style="left:1px;top:283px;width:24px;height:21px;background:#d3d3d3;background-image:radial-gradient(#bcbcbc 0.5px,transparent 0.75px),radial-gradient(#bcbcbc 0.5px,transparent 0.75px);background-size:6px 6px;background-position:0 0,3px 3px"></div>
<div class="a" style="left:25px;top:283px;width:2px;height:21px;background:#007540;"></div>
<div class="h" style="left:2px;top:284px;width:25px;height:19px;line-height:21px;color:#007540;transform:scaleX(0.93)">4</div>
<div class="a" style="left:27px;top:303px;width:979px;height:1px;background:#d4d4d4;"></div>
<div class="a" style="left:1px;top:303px;width:20px;height:1px;background:#bbbbbb;"></div>
<div class="a" style="left:21px;top:303px;width:5px;height:1px;background:#909090;"></div>
<div class="h" style="left:2px;top:304px;width:25px;height:19px;line-height:21px;color:#262626;transform:scaleX(0.93)">5</div>
<div class="a" style="left:27px;top:323px;width:979px;height:1px;background:#d4d4d4;"></div>
<div class="a" style="left:1px;top:323px;width:20px;height:1px;background:#bbbbbb;"></div>
<div class="a" style="left:21px;top:323px;width:5px;height:1px;background:#909090;"></div>
<div class="h" style="left:2px;top:324px;width:25px;height:19px;line-height:21px;color:#262626;transform:scaleX(0.93)">6</div>
<div class="a" style="left:27px;top:343px;width:979px;height:1px;background:#d4d4d4;"></div>
<div class="a" style="left:1px;top:343px;width:20px;height:1px;background:#bbbbbb;"></div>
<div class="a" style="left:21px;top:343px;width:5px;height:1px;background:#909090;"></div>
<div class="h" style="left:2px;top:344px;width:25px;height:19px;line-height:21px;color:#262626;transform:scaleX(0.93)">7</div>
<div class="a" style="left:27px;top:363px;width:979px;height:1px;background:#d4d4d4;"></div>
<div class="a" style="left:1px;top:363px;width:20px;height:1px;background:#bbbbbb;"></div>
<div class="a" style="left:21px;top:363px;width:5px;height:1px;background:#909090;"></div>
<div class="h" style="left:2px;top:364px;width:25px;height:19px;line-height:21px;color:#262626;transform:scaleX(0.93)">8</div>
<div class="a" style="left:27px;top:383px;width:979px;height:1px;background:#d4d4d4;"></div>
<div class="a" style="left:1px;top:383px;width:20px;height:1px;background:#bbbbbb;"></div>
<div class="a" style="left:21px;top:383px;width:5px;height:1px;background:#909090;"></div>
<div class="h" style="left:2px;top:384px;width:25px;height:19px;line-height:21px;color:#262626;transform:scaleX(0.93)">9</div>
<div class="a" style="left:27px;top:403px;width:979px;height:1px;background:#d4d4d4;"></div>
<div class="a" style="left:1px;top:403px;width:20px;height:1px;background:#bbbbbb;"></div>
<div class="a" style="left:21px;top:403px;width:5px;height:1px;background:#909090;"></div>
<div class="h" style="left:2px;top:404px;width:25px;height:19px;line-height:21px;color:#262626;transform:scaleX(0.93)">10</div>
<div class="a" style="left:27px;top:423px;width:979px;height:1px;background:#d4d4d4;"></div>
<div class="a" style="left:1px;top:423px;width:20px;height:1px;background:#bbbbbb;"></div>
<div class="a" style="left:21px;top:423px;width:5px;height:1px;background:#909090;"></div>
<div class="h" style="left:2px;top:424px;width:25px;height:19px;line-height:21px;color:#262626;transform:scaleX(0.93)">11</div>
<div class="a" style="left:27px;top:443px;width:979px;height:1px;background:#d4d4d4;"></div>
<div class="a" style="left:1px;top:443px;width:20px;height:1px;background:#bbbbbb;"></div>
<div class="a" style="left:21px;top:443px;width:5px;height:1px;background:#909090;"></div>
<div class="h" style="left:2px;top:444px;width:25px;height:19px;line-height:21px;color:#262626;transform:scaleX(0.93)">12</div>
<div class="a" style="left:27px;top:463px;width:979px;height:1px;background:#d4d4d4;"></div>
<div class="a" style="left:1px;top:463px;width:20px;height:1px;background:#bbbbbb;"></div>
<div class="a" style="left:21px;top:463px;width:5px;height:1px;background:#909090;"></div>
<div class="h" style="left:2px;top:464px;width:25px;height:19px;line-height:21px;color:#262626;transform:scaleX(0.93)">13</div>
<div class="a" style="left:27px;top:483px;width:979px;height:1px;background:#d4d4d4;"></div>
<div class="a" style="left:1px;top:483px;width:20px;height:1px;background:#bbbbbb;"></div>
<div class="a" style="left:21px;top:483px;width:5px;height:1px;background:#909090;"></div>
<div class="h" style="left:2px;top:484px;width:25px;height:19px;line-height:21px;color:#262626;transform:scaleX(0.93)">14</div>
<div class="a" style="left:27px;top:503px;width:979px;height:1px;background:#d4d4d4;"></div>
<div class="a" style="left:1px;top:503px;width:20px;height:1px;background:#bbbbbb;"></div>
<div class="a" style="left:21px;top:503px;width:5px;height:1px;background:#909090;"></div>
<div class="h" style="left:2px;top:504px;width:25px;height:19px;line-height:21px;color:#262626;transform:scaleX(0.93)">15</div>
<div class="a" style="left:27px;top:523px;width:979px;height:1px;background:#d4d4d4;"></div>
<div class="a" style="left:1px;top:523px;width:20px;height:1px;background:#bbbbbb;"></div>
<div class="a" style="left:21px;top:523px;width:5px;height:1px;background:#909090;"></div>
<div class="h" style="left:2px;top:524px;width:25px;height:19px;line-height:21px;color:#262626;transform:scaleX(0.93)">16</div>
<div class="a" style="left:27px;top:543px;width:979px;height:1px;background:#d4d4d4;"></div>
<div class="a" style="left:1px;top:543px;width:20px;height:1px;background:#bbbbbb;"></div>
<div class="a" style="left:21px;top:543px;width:5px;height:1px;background:#909090;"></div>
<div class="h" style="left:2px;top:544px;width:25px;height:19px;line-height:21px;color:#262626;transform:scaleX(0.93)">17</div>
<div class="a" style="left:27px;top:563px;width:979px;height:1px;background:#d4d4d4;"></div>
<div class="a" style="left:1px;top:563px;width:20px;height:1px;background:#bbbbbb;"></div>
<div class="a" style="left:21px;top:563px;width:5px;height:1px;background:#909090;"></div>
<div class="h" style="left:2px;top:564px;width:25px;height:19px;line-height:21px;color:#262626;transform:scaleX(0.93)">18</div>
<div class="a" style="left:27px;top:583px;width:979px;height:1px;background:#d4d4d4;"></div>
<div class="a" style="left:1px;top:583px;width:20px;height:1px;background:#bbbbbb;"></div>
<div class="a" style="left:21px;top:583px;width:5px;height:1px;background:#909090;"></div>
<div class="h" style="left:2px;top:584px;width:25px;height:19px;line-height:21px;color:#262626;transform:scaleX(0.93)">19</div>
<div class="a" style="left:27px;top:603px;width:979px;height:1px;background:#d4d4d4;"></div>
<div class="a" style="left:1px;top:603px;width:20px;height:1px;background:#bbbbbb;"></div>
<div class="a" style="left:21px;top:603px;width:5px;height:1px;background:#909090;"></div>
<div class="h" style="left:2px;top:604px;width:25px;height:19px;line-height:21px;color:#262626;transform:scaleX(0.93)">20</div>
<div class="a" style="left:27px;top:623px;width:979px;height:1px;background:#d4d4d4;"></div>
<div class="a" style="left:1px;top:623px;width:20px;height:1px;background:#bbbbbb;"></div>
<div class="a" style="left:21px;top:623px;width:5px;height:1px;background:#909090;"></div>
<div class="h" style="left:2px;top:624px;width:25px;height:19px;line-height:21px;color:#262626;transform:scaleX(0.93)">21</div>
<div class="a" style="left:27px;top:643px;width:979px;height:1px;background:#d4d4d4;"></div>
<div class="a" style="left:1px;top:643px;width:20px;height:1px;background:#bbbbbb;"></div>
<div class="a" style="left:21px;top:643px;width:5px;height:1px;background:#909090;"></div>
<div class="h" style="left:2px;top:644px;width:25px;height:19px;line-height:21px;color:#262626;transform:scaleX(0.93)">22</div>
<div class="a" style="left:27px;top:663px;width:979px;height:1px;background:#d4d4d4;"></div>
<div class="a" style="left:1px;top:663px;width:20px;height:1px;background:#bbbbbb;"></div>
<div class="a" style="left:21px;top:663px;width:5px;height:1px;background:#909090;"></div>
<div class="a" style="left:89px;top:282px;width:63px;height:19px;background:#fff;border:2px solid #007540"></div>
<div class="a" style="left:151px;top:300px;width:7px;height:7px;background:#fff;"></div>
<div class="a" style="left:152px;top:301px;width:5px;height:5px;background:#007540;"></div>
<div class="t" style="left:131.80px;top:288px;font-size:12.5px;line-height:14px;height:14px;color:#262626;transform:scaleX(0.9677);-webkit-text-stroke:0.4px">101</div>
<div class="a" style="left:86px;top:278px;width:68px;height:26px;border:3px solid #fe0000;border-radius:8.5px"></div>
<div class="a" style="left:1009px;top:206px;width:13px;height:14px;background:#fff;border:1px solid #b6b6b6"></div>
<svg class="a" style="left:1012.5px;top:211px" width="7" height="4" viewBox="0 0 7 4"><path d="M0 4L3.5 0L7 4z" fill="#777"/></svg>
<div class="a" style="left:1009px;top:221px;width:13px;height:409px;background:#fff;border:1px solid #b6b6b6"></div>
<div class="a" style="left:1009px;top:632px;width:15px;height:20px;background:#d9d9d9;background-image:radial-gradient(#c4c4c4 0.6px,transparent 0.8px);background-size:3px 3px"></div>
<div class="a" style="left:1009px;top:652px;width:13px;height:13px;background:#fff;border:1px solid #b6b6b6"></div>
<svg class="a" style="left:1012.5px;top:657.5px" width="7" height="4" viewBox="0 0 7 4"><path d="M0 0h7L3.5 4z" fill="#666"/></svg>
<div class="a" style="left:102px;top:666px;width:105px;height:23px;background:#fff;"></div>
<div class="a" style="left:101px;top:666px;width:1px;height:25px;background:#8f8f8f;"></div>
<div class="a" style="left:207px;top:666px;width:1px;height:25px;background:#8f8f8f;"></div>
<div class="a" style="left:101px;top:689px;width:107px;height:2px;background:#007540;"></div>
<div class="t" style="left:113.30px;top:672px;font-size:13px;line-height:15px;height:15px;color:#007540;font-weight:bold;transform:scaleX(0.9787);">microexcel.ru</div>
<svg class="a" style="left:28px;top:676px" width="5" height="7" viewBox="0 0 5 7"><path d="M5 0V7L0.4 3.5z" fill="#b4b4b4"/></svg>
<svg class="a" style="left:56px;top:676px" width="5" height="7" viewBox="0 0 5 7"><path d="M0 0V7L4.6 3.5z" fill="#b4b4b4"/></svg>
<svg class="a" style="left:241px;top:672px" width="16" height="16" viewBox="0 0 16 16"><circle cx="8" cy="8" r="7.4" fill="none" stroke="#b4b4b4" stroke-width="1"/><path d="M4.4 8h7.2M8 4.4v7.2" stroke="#b4b4b4" stroke-width="1.8"/></svg>
<div class="a" style="left:616px;top:675px;width:2px;height:2px;background:#b4b4b4;"></div>
<div class="a" style="left:616px;top:679px;width:2px;height:2px;background:#b4b4b4;"></div>
<div class="a" style="left:616px;top:683px;width:2px;height:2px;background:#b4b4b4;"></div>
<div class="a" style="left:633px;top:673px;width:13px;height:13px;background:#fff;border:1px solid #b6b6b6"></div>
<svg class="a" style="left:637.5px;top:676.5px" width="4" height="7" viewBox="0 0 4 7"><path d="M4 0V7L0 3.5z" fill="#666"/></svg>
<div class="a" style="left:648px;top:673px;width:318px;height:13px;background:#fff;border:1px solid #b6b6b6"></div>
<div class="a" style="left:968px;top:674px;width:23px;height:13px;background:#d9d9d9;background-image:radial-gradient(#c4c4c4 0.6px,transparent 0.8px);background-size:3px 3px"></div>
<div class="a" style="left:991px;top:673px;width:13px;height:13px;background:#fff;border:1px solid #b6b6b6"></div>
<svg class="a" style="left:996.5px;top:676.5px" width="4" height="7" viewBox="0 0 4 7"><path d="M0 0V7L4 3.5z" fill="#666"/></svg>
<div class="a" style="left:1px;top:694px;width:1026px;height:1px;background:#c6c6c6;"></div>
<div class="a" style="left:1px;top:695px;width:1026px;height:21px;background:#f3f3f3;"></div>
<div class="t" style="left:9.80px;top:698px;font-size:11.6px;line-height:12px;height:12px;color:#262626;transform:scaleX(0.9812);">Готово</div>
<svg class="a" style="left:65px;top:698px" width="14" height="13" viewBox="0 0 14 13"><path d="M1.7 5.6V12.1H12.3V1.8H6" fill="none" stroke="#666" stroke-width="1.1"/><rect x="6.6" y="1.2" width="6.2" height="1.7" fill="#666"/>
<path d="M4 6.5h2M7 6.5h2M10 6.5h1.6M4 8.5h2M7 8.5h2M10 8.5h1.6M4 10.5h2M7 10.5h2M10 10.5h1.6" stroke="#666" stroke-width="1"/>
<circle cx="3" cy="3" r="2.8" fill="#666"/></svg>
<div class="a" style="left:727px;top:695px;width:38px;height:21px;background:#c8c8c8;background-image:radial-gradient(#bababa 0.6px,transparent 0.8px);background-size:3px 3px"></div>
<svg class="a" style="left:739px;top:698px" width="13" height="13" viewBox="0 0 13 13"><path d="M0.75 0.75h11.5v11.5H0.75zM4.6 0.75v11.5M8.4 0.75v11.5M0.75 4.6h11.5M0.75 8.4h11.5" fill="none" stroke="#666" stroke-width="1.5"/></svg>
<svg class="a" style="left:777px;top:698px" width="14" height="13" viewBox="0 0 14 13"><rect x="0.6" y="0.6" width="12.8" height="11.8" fill="none" stroke="#666" stroke-width="1.2"/><rect x="3.6" y="2.9" width="6.8" height="7.2" fill="none" stroke="#666" stroke-width="1"/><path d="M5 5.1h4M5 6.9h4M5 8.6h4" stroke="#666" stroke-width="0.8"/></svg>
<svg class="a" style="left:815px;top:698px" width="14" height="13" viewBox="0 0 14 13"><rect x="0.6" y="0.6" width="12.8" height="11.8" fill="none" stroke="#666" stroke-width="1.2"/><path d="M4.2 0.6V7.2M8.6 0.6V7.2M0.6 7.2H8.6" fill="none" stroke="#666" stroke-width="1.1"/></svg>
<div class="a" style="left:846px;top:704px;width:6px;height:2px;background:#5e5e5e;"></div>
<div class="a" style="left:856px;top:705px;width:100px;height:1px;background:#a0a0a0;"></div>
<div class="a" style="left:904px;top:699px;width:5px;height:11px;background:#5e5e5e;"></div>
<div class="a" style="left:960px;top:704px;width:7px;height:2px;background:#5e5e5e;"></div>
<div class="a" style="left:962.5px;top:701.5px;width:2px;height:7px;background:#5e5e5e;"></div>
<div class="t" style="left:979.30px;top:697.5px;font-size:11.8px;line-height:14px;height:14px;color:#262626;transform:scaleX(0.8479);">100 %</div>
<div class="a" style="left:0px;top:0px;width:1px;height:717px;background:#007540;"></div>
<div class="a" style="left:1027px;top:0px;width:1px;height:717px;background:#007540;"></div>
<div class="a" style="left:0px;top:716px;width:1028px;height:1px;background:#007540;"></div>
</body></html>
